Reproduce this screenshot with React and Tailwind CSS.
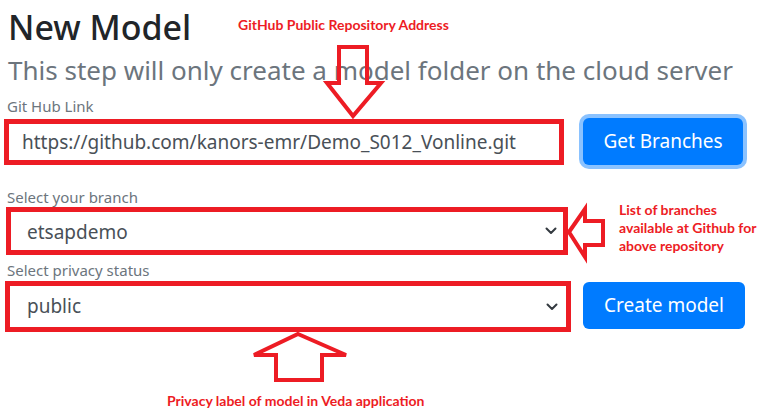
import React from 'react';

const RED = '#ed1c24';

function Chevron() {
  return (
    <svg width="12" height="8" viewBox="0 0 12 8" className="shrink-0">
      <path d="M1.5 1.5 L6 6 L10.5 1.5" fill="none" stroke="#343a40" strokeWidth="2" strokeLinecap="round" strokeLinejoin="round" />
    </svg>
  );
}

function Arrows() {
  return (
    <svg className="absolute inset-0 pointer-events-none" width="771" height="420" viewBox="0 0 771 420">
      <g fill="none" stroke={RED} strokeWidth="4" strokeLinejoin="miter">
        {/* down arrow over the link field */}
        <polygon points="339,47 367,47 367,83 381,83 353,116 327,83 339,83" />
        {/* left arrow pointing at branch select */}
        <polygon points="569,232 585,209 585,221 603,221 603,245 585,245 585,257" />
        {/* up arrow under privacy select */}
        <polygon points="298,334 346,355 322,355 322,380 276,380 276,355 254,355" />
      </g>
    </svg>
  );
}

export default function App() {
  return (
    <div className="relative w-[771px] h-[420px] overflow-hidden bg-white font-['Noto_Sans',sans-serif]">
      <h1 className="ml-[8px] pt-[5px] text-[34px] leading-[44px] font-medium text-[#212529]">New Model</h1>
      <p className="ml-[8px] mt-[4px] text-[26px] leading-[34px] text-[#6c757d] whitespace-nowrap">
        This step will only create a model folder on the cloud server
      </p>

      <label className="block ml-[7px] mt-[9px] text-[15px] leading-[20px] text-[#6c757d]">Git Hub Link</label>
      <div className="flex items-start mt-[2px]">
        <div className="ml-[4px] mt-[1px] w-[560px] h-[46px] border-[5px] border-[#ed1c24] bg-white flex items-center">
          <span className="pl-[13px] text-[19px] text-[#495057] whitespace-nowrap">
            https://github.com/kanors-emr/Demo_S012_Vonline.git
          </span>
        </div>
        <button className="ml-[19px] w-[160px] h-[47px] rounded-[6px] bg-[#007bff] text-white text-[19px] ring-[4px] ring-[#8ac2ff]">
          Get Branches
        </button>
      </div>

      <label className="block ml-[7px] mt-[22px] text-[15px] leading-[20px] text-[#6c757d]">Select your branch</label>
      <div className="ml-[6px] w-[562px] h-[48px] border-[5px] border-[#ed1c24] bg-white flex items-center justify-between pr-[6px]">
        <span className="pl-[16px] pt-[3px] text-[19px] text-[#495057]">etsapdemo</span>
        <Chevron />
      </div>

      <label className="block ml-[7px] mt-[5px] text-[15px] leading-[20px] text-[#6c757d]">Select privacy status</label>
      <div className="flex items-start mt-[1px]">
        <div className="ml-[5px] w-[566px] h-[51px] border-[5px] border-[#ed1c24] bg-white flex items-center justify-between pr-[8px]">
          <span className="pl-[17px] text-[19px] text-[#495057]">public</span>
          <Chevron />
        </div>
        <button className="ml-[12px] mt-[1px] w-[162px] h-[47px] rounded-[6px] bg-[#007bff] text-white text-[19px]">
          Create model
        </button>
      </div>

      <Arrows />

      <div className="absolute left-[238px] top-[16px] font-['Lato',sans-serif] font-bold text-[14px] leading-[18px] text-[#ed1c24] whitespace-nowrap">
        GitHub Public Repository Address
      </div>
      <div className="absolute left-[619px] top-[201px] font-['Lato',sans-serif] font-bold text-[14px] leading-[18px] text-[#ed1c24] whitespace-nowrap">
        List of branches
        <br />
        available at Github for
        <br />
        above repository
      </div>
      <div className="absolute left-[167px] top-[392px] font-['Lato',sans-serif] font-bold text-[14px] leading-[18px] text-[#ed1c24] whitespace-nowrap">
        Privacy label of model in Veda application
      </div>
    </div>
  );
}
